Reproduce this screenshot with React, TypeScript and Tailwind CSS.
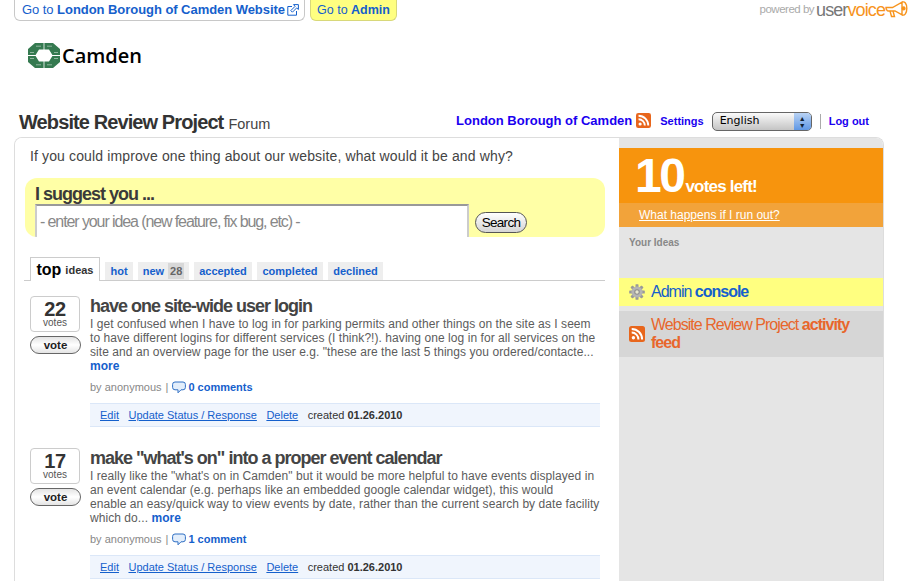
const ideas = [
  {
    votes: 22,
    title: 'have one site-wide user login',
    lines: [
      'I get confused when I have to log in for parking permits and other things on the site as I seem',
      'to have different logins for different services (I think?!). having one log in for all services on the',
      'site and an overview page for the user e.g. "these are the last 5 things you ordered/contacte...',
    ],
    tail: '',
    comments: '0 comments',
  },
  {
    votes: 17,
    title: 'make "what\'s on" into a proper event calendar',
    lines: [
      'I really like the "what\'s on in Camden" but it would be more helpful to have events displayed in',
      'an event calendar (e.g. perhaps like an embedded google calendar widget), this would',
      'enable an easy/quick way to view events by date, rather than the current search by date facility',
    ],
    tail: 'which do... ',
    comments: '1 comment',
  },
];

const tabs = [
  { label: 'hot', width: 'w-[28px]' },
  { label: 'new', count: '28', width: 'w-[51px]' },
  { label: 'accepted', width: 'w-[58px]' },
  { label: 'completed', width: 'w-[66px]' },
  { label: 'declined', width: 'w-[55px]' },
];

function RssIcon({ size = 15 }: { size?: number }) {
  return (
    <svg width={size} height={size} viewBox="0 0 16 16" className="shrink-0">
      <rect width="16" height="16" rx="2.5" fill="#e8661c" />
      <circle cx="4.4" cy="11.7" r="1.7" fill="#fff" />
      <path d="M2.7 6.6a6.7 6.7 0 0 1 6.7 6.8" stroke="#fff" strokeWidth="2" fill="none" />
      <path d="M2.7 2.9a10.4 10.4 0 0 1 10.4 10.5" stroke="#fff" strokeWidth="2" fill="none" />
    </svg>
  );
}

function CamdenMark() {
  return (
    <svg width="32" height="25" viewBox="0 0 32 25" className="shrink-0">
      <g fill="#357a50">
        <path d="M7 0h8.6v6.6H11L7.6 11.9H0V6z" />
        <path d="M25 0h-8.6v6.6H21l3.4 5.3H32V6z" />
        <path d="M7 25h8.6v-6.6H11l-3.4-5.3H0V19z" />
        <path d="M25 25h-8.6v-6.6H21l3.4-5.3H32V19z" />
      </g>
      <g stroke="#cfe0d5" strokeWidth="0.6">
        <path d="M8 3.2h5M19 3.2h5M8 21.8h5M19 21.8h5M2 9.5h4M26 9.5h4M2 15.5h4M26 15.5h4" />
      </g>
    </svg>
  );
}

function Megaphone() {
  return (
    <svg width="23" height="20" viewBox="0 0 23 20" fill="none" stroke="#f7941d" strokeWidth="1.4" className="shrink-0">
      <path d="M1 7.5h6.5L17 2.2v12.6L10 11H3.5C2 11 1 9 1 7.5z" />
      <path d="M17 2.2c2.6-1.2 4.8 1.4 4.8 6.2s-2.2 7.6-4.8 6.4" />
      <path d="M5 11l1.5 5.5h3L8 11" />
      <circle cx="18.6" cy="8.4" r="1.4" fill="#f7941d" />
    </svg>
  );
}

function Gear() {
  return (
    <svg width="16" height="16" viewBox="0 0 16 16" className="shrink-0">
      <g fill="#999">
        {[0, 45, 90, 135].map(a => (
          <rect key={a} x="6.5" y="0.2" width="3" height="15.6" rx="0.6" transform={`rotate(${a} 8 8)`} />
        ))}
      </g>
      <circle cx="8" cy="8" r="5.6" fill="#b4b4b4" />
      <circle cx="8" cy="8" r="2.8" fill="#8f8f8f" />
      <circle cx="8" cy="8" r="1.7" fill="#e8e8d0" />
    </svg>
  );
}

function Bubble() {
  return (
    <svg width="14" height="13" viewBox="0 0 14 13" fill="#e3eefb" stroke="#2f6fc4" strokeWidth="1" className="shrink-0">
      <path d="M3 1h8a2.4 2.4 0 0 1 2.4 2.4v3A2.4 2.4 0 0 1 11 8.8H9l-3 3v-3H3A2.4 2.4 0 0 1 .6 6.4v-3A2.4 2.4 0 0 1 3 1z" />
    </svg>
  );
}

function ExternalIcon() {
  return (
    <svg width="12" height="12" viewBox="0 0 12 12" fill="none" stroke="#1560cc" strokeWidth="1" className="shrink-0">
      <path d="M5 2.5H.8v8.7h8.7V7" />
      <path d="M6.5.6h4.9v4.9L9.7 3.9 5.4 8.2 3.8 6.6l4.3-4.3z" />
    </svg>
  );
}

export default function App() {
  return (
    <div className="h-[581px] w-[915px] overflow-hidden bg-white font-['Liberation_Sans',Arial,sans-serif] text-[#444]">
      {/* top links */}
      <div className="flex h-[21px] items-start pl-[14px] pr-[7px]">
        <a className="flex h-[21px] w-[291px] items-center gap-[2px] rounded-b-[6px] border border-t-0 border-[#c8c8c8] pl-[7px] text-[13px] tracking-[-0.05px] text-[#1560cc]">
          <span>Go to <b>London Borough of Camden Website</b></span>
          <ExternalIcon />
        </a>
        <a className="ml-[5px] flex h-[21px] w-[87px] items-center justify-center rounded-b-[6px] border border-t-0 border-[#d8d87a] bg-[#ffff80] text-[12.5px] text-[#1560cc]">
          <span>Go to <b>Admin</b></span>
        </a>
        <div className="ml-auto flex items-center">
          <span className="text-[11.5px] tracking-[-0.5px] text-[#aaa]">powered by</span>
          <span className="ml-[2px] text-[18px] leading-[20px] tracking-[-0.9px] text-[#777]">user</span>
          <span className="text-[18px] leading-[20px] tracking-[-0.9px] text-[#f7941d]">voice</span>
          <Megaphone />
        </div>
      </div>

      {/* logo */}
      <div className="flex items-center gap-[2px] pl-[28px] pt-[22px]">
        <CamdenMark />
        <span className="font-['Open_Sans',sans-serif] text-[20px] font-semibold leading-[25px] text-black">Camden</span>
      </div>

      {/* project heading */}
      <div className="mt-[40px] flex h-[27px] items-center pl-[19px] pr-[46px]">
        <div className="flex items-baseline gap-[5px]">
          <h1 className="text-[20px] font-bold tracking-[-0.9px] text-[#333]">Website Review Project</h1>
          <span className="text-[14.5px] text-[#444]">Forum</span>
        </div>
        <div className="relative -top-px ml-auto flex items-center">
          <a className="text-[13px] font-bold text-[#1a00f0]">London Borough of Camden</a>
          <span className="ml-[4px]"><RssIcon /></span>
          <a className="ml-[9px] mt-[2px] text-[11px] font-bold text-[#1a00f0]">Settings</a>
          <div className="ml-[8px] mt-[2px] flex h-[19px] w-[100px] items-center justify-between overflow-hidden rounded-[5px] border border-[#666] bg-gradient-to-b from-[#fafafa] to-[#c4c4c4] pl-[7px] text-[12px] text-black">
            <span className="font-['DejaVu_Sans',sans-serif] text-[11px]">English</span>
            <span className="flex h-full w-[17px] flex-col items-center justify-center bg-gradient-to-b from-[#b9d3f4] to-[#5f97e4] text-[7px] leading-[7px] text-[#123]">
              <span>▲</span>
              <span>▼</span>
            </span>
          </div>
          <span className="ml-[8px] mt-[2px] h-[15px] w-px bg-[#aaa]" />
          <a className="ml-[8px] mt-[2px] text-[11px] font-bold text-[#1a00f0]">Log out</a>
        </div>
      </div>

      {/* forum box */}
      <div className="ml-[14px] mt-[2px] flex h-[460px] w-[870px] overflow-hidden rounded-t-[8px] border border-b-0 border-[#ddd]">
        <div className="w-[604px] shrink-0 bg-white">
          <p className="pl-[15px] pt-[10px] text-[14px] leading-[16px] tracking-[0.13px]">If you could improve one thing about our website, what would it be and why?</p>

          <div className="ml-[10px] mt-[14px] h-[59px] w-[580px] overflow-hidden rounded-[12px] bg-[#ffffa6] pl-[10px] pt-[6px]">
            <div className="text-[18px] font-bold leading-[20px] tracking-[-1px] text-[#3a3a3a]">I suggest you ...</div>
            <div className="flex items-start">
              <div className="flex h-[34px] w-[434px] items-center border-2 border-b-0 border-[#999] border-b-transparent border-r-[#ccc] border-l-[#ccc] bg-white pl-[3px] text-[16px] tracking-[-1.1px] text-[#888]">
                - enter your idea (new feature, fix bug, etc) -
              </div>
              <button className="ml-[6px] mt-[8px] h-[21px] w-[52px] rounded-full border border-[#555] bg-gradient-to-b from-white to-[#d5d5d5] text-[13.5px] leading-[18px] tracking-[-0.7px] text-black">Search</button>
            </div>
          </div>

          {/* tabs */}
          <div className="ml-[9px] mt-[20px] flex h-[24px] w-[581px] items-end gap-[5px] border-b border-[#ccc] pl-[6px]">
            <div className="relative top-px flex h-[24px] w-[70px] items-center justify-center gap-[4px] border border-b-0 border-[#ccc] bg-white pt-[1px] text-black">
              <b className="text-[16px]">top</b>
              <b className="text-[11px] text-[#333]">ideas</b>
            </div>
            {tabs.map(t => (
              <div key={t.label} className={`flex h-[18px] items-center justify-center gap-[4px] bg-[#eee] text-[11px] font-bold text-[#1560cc] ${t.width}`}>
                {t.label}
                {t.count && <span className="bg-[#d8d8d8] px-[2px] text-[#666]">{t.count}</span>}
              </div>
            ))}
          </div>

          {/* ideas */}
          <div className="pt-[15px]">
            {ideas.map(idea => (
              <div key={idea.title} className="flex h-[152px] pl-[15px]">
                <div className="w-[51px] shrink-0">
                  <div className="flex h-[36px] w-[50px] flex-col items-center rounded-[4px] border border-[#ccc] pt-[4px]">
                    <b className="text-[20px] leading-[17px] tracking-[-0.4px] text-[#333]">{idea.votes}</b>
                    <span className="text-[10px] leading-[10px] text-[#555]">votes</span>
                  </div>
                  <button className="mt-[4px] h-[18px] w-[51px] rounded-full border border-[#666] bg-gradient-to-b from-[#e4e4e4] via-white to-[#e4e4e4] text-[11.5px] font-bold leading-[14px] text-[#222]">vote</button>
                </div>
                <div className="ml-[9px] w-[510px]">
                  <h2 className="text-[18px] font-bold leading-[20px] tracking-[-1px] text-[#444]">{idea.title}</h2>
                  <div className="mt-[1px] text-[12px] leading-[14px] tracking-[0.06px] text-[#5c5c5c]">
                    {idea.lines.map(line => (
                      <div key={line} className="whitespace-nowrap">{line}</div>
                    ))}
                    <div>
                      {idea.tail}
                      <a className="font-bold text-[#1560cc]">more</a>
                    </div>
                  </div>
                  <div className="mt-[7px] flex h-[14px] items-center text-[11px] text-[#888]">
                    <span>by anonymous</span>
                    <span className="mx-[4px]">|</span>
                    <Bubble />
                    <b className="ml-[2px] text-[#1560cc]">{idea.comments}</b>
                  </div>
                  <div className="mt-[9px] flex h-[24px] items-center gap-[9.5px] border-y border-[#dbe7f8] bg-[#f0f5fd] pl-[10px] text-[11px] text-[#333]">
                    <a className="text-[#1560cc] underline">Edit</a>
                    <a className="text-[#1560cc] underline">Update Status / Response</a>
                    <a className="text-[#1560cc] underline">Delete</a>
                    <span>created <b>01.26.2010</b></span>
                  </div>
                </div>
              </div>
            ))}
          </div>
        </div>

        {/* sidebar */}
        <div className="flex-1 bg-[#e5e5e5] pt-[10px]">
          <div className="flex h-[55px] items-end bg-[#f7940d] pb-[3px] pl-[16px] text-white">
            <b className="text-[48px] leading-[48px] tracking-[-2.5px]">10</b>
            <b className="mb-[1px] ml-[2px] text-[17px] tracking-[-0.8px]">votes left!</b>
          </div>
          <div className="flex h-[24px] items-center bg-[#f2a33a] pl-[20px] text-[12px] text-white">
            <a className="underline">What happens if I run out?</a>
          </div>
          <div className="h-[51px] pl-[10px] pt-[10px] text-[10px] font-bold leading-[12px] text-[#888]">Your Ideas</div>
          <div className="flex h-[28px] items-center gap-[6px] bg-[#ffff80] pl-[10px] text-[16px] tracking-[-1px] text-[#1560cc]">
            <Gear />
            <span>Admin <b>console</b></span>
          </div>
          <div className="mt-[5px] flex h-[46px] items-center gap-[6px] bg-[#d6d6d6] pl-[10px] pr-[20px] text-[16px] leading-[18px] tracking-[-0.97px] text-[#e8662c]">
            <RssIcon size={16} />
            <span>Website Review Project <b>activity feed</b></span>
          </div>
        </div>
      </div>
    </div>
  );
}
